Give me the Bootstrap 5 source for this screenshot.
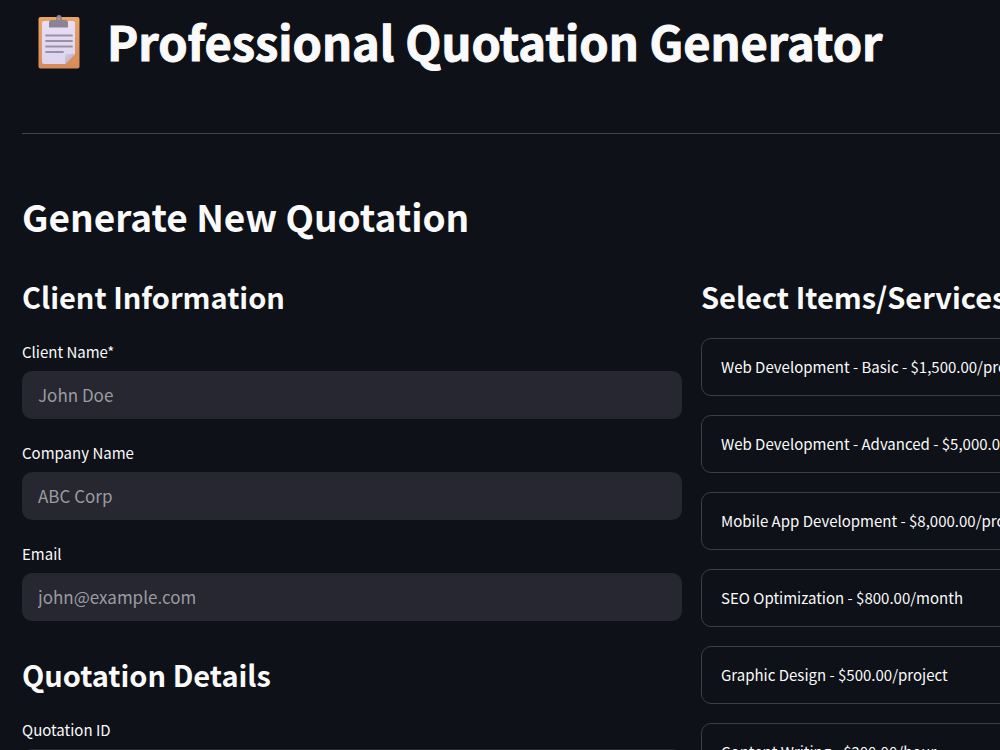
<!DOCTYPE html>
<html lang="en" data-bs-theme="dark">
<head>
<meta charset="utf-8">
<meta name="viewport" content="width=device-width, initial-scale=1">
<title>Professional Quotation Generator</title>
<link href="https://cdn.jsdelivr.net/npm/bootstrap@5.3.0/dist/css/bootstrap.min.css" rel="stylesheet">
<style>
body { background: #0e1117; color: #fafafa; font-family: "Noto Sans CJK SC", sans-serif; }
.page { padding: 11px 0 0 22px; }
h1 { font-size: 47px; line-height: 60px; font-weight: 700; -webkit-text-stroke: 1px #fafafa; }
h2 { font-size: 37px; line-height: 50px; font-weight: 700; margin-bottom: 35px; }
h3 { font-size: 29px; line-height: 40px; font-weight: 700; }
h1, h2, h3 { color: #fafafa; }
.title-icon { width: 42px; height: 56px; margin: 0 27px 0 16px; }
.rule { border-top: 1px solid #41444c; opacity: 1; margin: 62px 0 57px; }
.columns { display: grid; grid-template-columns: 66vw 66vw; column-gap: 19px; }
.fields h3 { margin-bottom: 24px; }
.field { margin-bottom: 22px; }
.field label { font-size: 15px; line-height: 24px; margin-bottom: 7px; }
.field .form-control { height: 48px; padding: 0 16px 2px; font-size: 17px; background: #262730; border: 0; border-radius: 10px; color: #fafafa; }
.field .form-control::placeholder { color: #9c9ca1; opacity: 1; }
.fields .field ~ h3 { margin-top: 33px; }
.services h3 { margin-bottom: 22px; }
.services .stack-list { gap: 19px; }
.service { height: 58px; padding: 0 19px; font-size: 15px; color: #fafafa; border: 1px solid #3b3e45; border-radius: 10px; }
</style>
</head>
<body>
<main class="page vh-100 overflow-hidden">
  <header class="d-flex align-items-center">
    <svg class="title-icon flex-shrink-0" viewBox="0 0 42 56" aria-hidden="true">
      <defs>
        <linearGradient id="board" x1="0" y1="0" x2="0" y2="1"><stop offset="0" stop-color="#e9a466"/><stop offset="1" stop-color="#d88b5b"/></linearGradient>
        <linearGradient id="sheet" x1="0" y1="0" x2="0" y2="1"><stop offset="0" stop-color="#e8def3"/><stop offset="1" stop-color="#dcd5ee"/></linearGradient>
        <linearGradient id="fold" x1="0" y1="0" x2="1" y2="1"><stop offset="0" stop-color="#d5cce2"/><stop offset="1" stop-color="#aa9fbb"/></linearGradient>
      </defs>
      <rect x="0.500" y="4" width="41" height="51.500" rx="2" fill="url(#board)"/>
      <path d="M6 8h29q2 0 2 2v31L27 51H6q-2 0-2-2V10q0-2 2-2z" fill="url(#sheet)"/>
      <path d="M37 41 27 51.500V43q0-2 2-2z" fill="url(#fold)"/>
      <path d="M11 14.500V10q0-3 3-3h4q0-5 3-5t3 5h3q3 0 3 3v4.500z" fill="#8c8293"/>
      <circle cx="20.800" cy="5.800" r="1.300" fill="#d89a6b"/>
      <path d="M8 22.500h26M8 28h26M8 33.500h26M8 39h17" stroke="#9a91a5" stroke-width="1.800" stroke-linecap="round"/>
    </svg>
    <h1 class="mb-0 text-nowrap">Professional Quotation Generator</h1>
  </header>
  <hr class="rule">
  <h2>Generate New Quotation</h2>
  <div class="columns">
    <form class="fields">
      <h3>Client Information</h3>
      <div class="field"><label class="d-block" for="client">Client Name*</label><input class="form-control" id="client" type="text" placeholder="John Doe"></div>
      <div class="field"><label class="d-block" for="company">Company Name</label><input class="form-control" id="company" type="text" placeholder="ABC Corp"></div>
      <div class="field"><label class="d-block" for="email">Email</label><input class="form-control" id="email" type="email" placeholder="john@example.com"></div>
      <h3>Quotation Details</h3>
      <div class="field"><label class="d-block" for="quote">Quotation ID</label><input class="form-control" id="quote" type="text"></div>
    </form>
    <section class="services">
      <h3>Select Items/Services</h3>
      <div class="stack-list d-flex flex-column">
        <button type="button" class="service btn text-start">Web Development - Basic - $1,500.00/project</button>
        <button type="button" class="service btn text-start">Web Development - Advanced - $5,000.00/project</button>
        <button type="button" class="service btn text-start">Mobile App Development - $8,000.00/project</button>
        <button type="button" class="service btn text-start">SEO Optimization - $800.00/month</button>
        <button type="button" class="service btn text-start">Graphic Design - $500.00/project</button>
        <button type="button" class="service btn text-start">Content Writing - $200.00/hour</button>
      </div>
    </section>
  </div>
</main>
<script src="https://cdn.jsdelivr.net/npm/bootstrap@5.3.0/dist/js/bootstrap.bundle.min.js"></script>
</body>
</html>
